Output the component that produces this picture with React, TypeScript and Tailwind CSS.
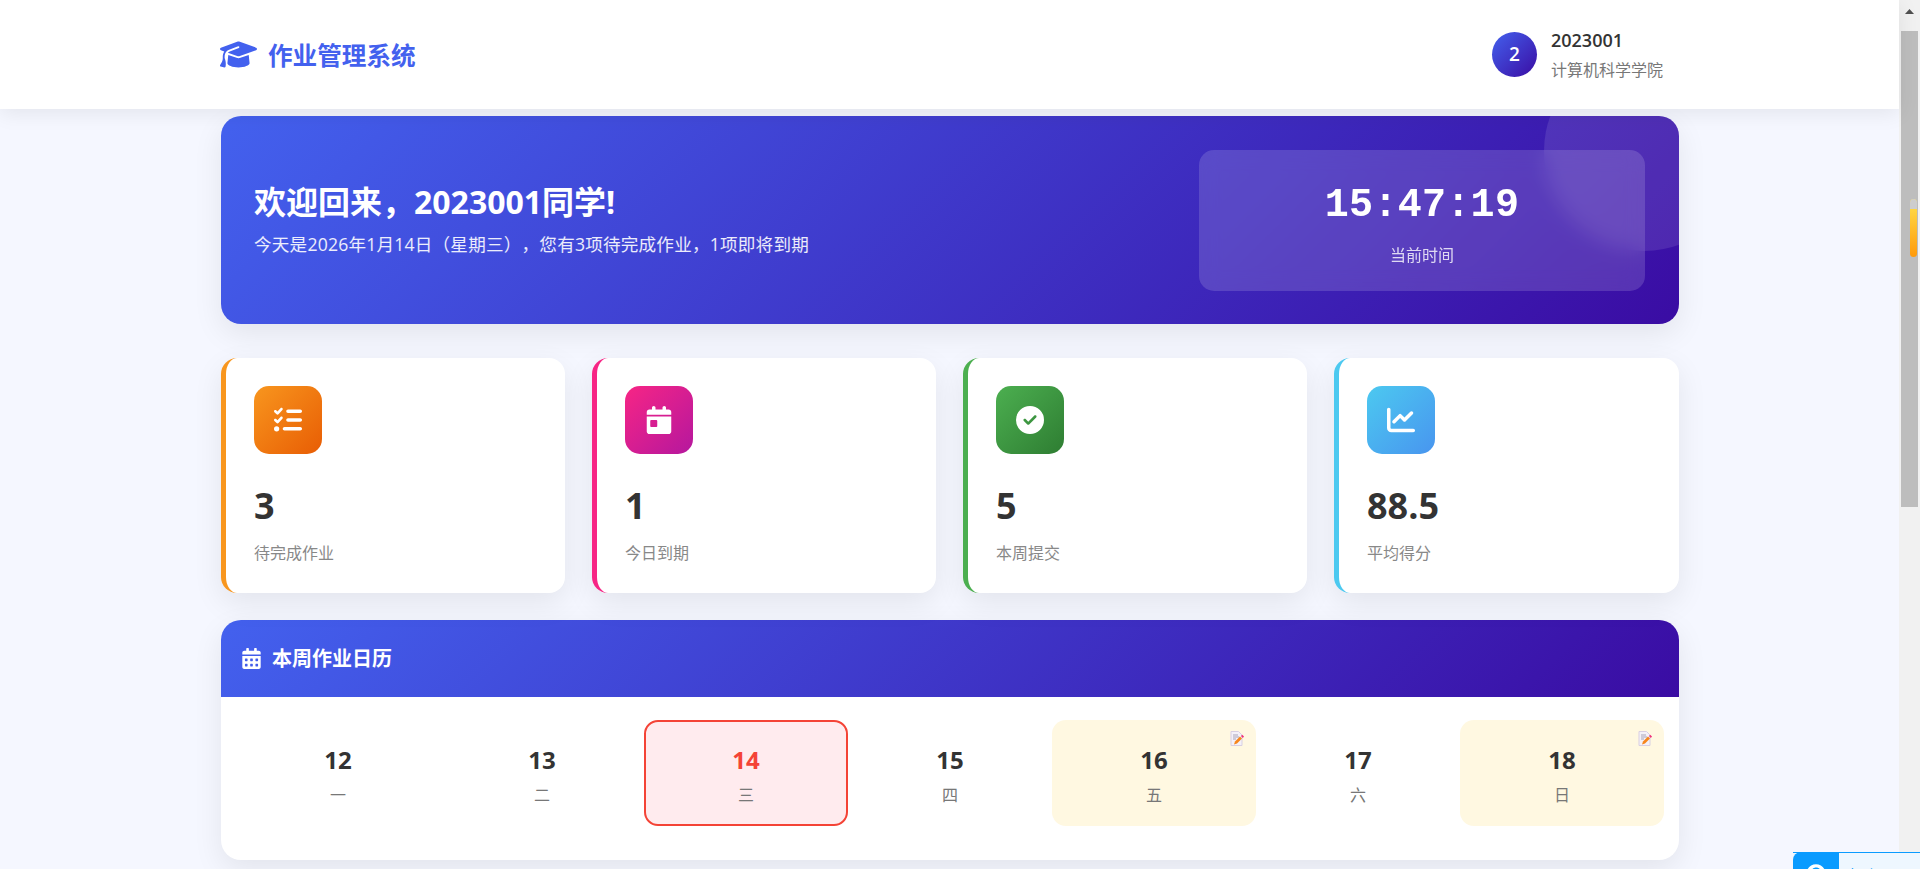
import { FaCalendarAlt, FaQuestionCircle } from "react-icons/fa";
import {
  FaGraduationCap,
  FaListCheck,
  FaCalendarDay,
  FaCircleCheck,
  FaChartLine,
} from "react-icons/fa6";

const stats = [
  {
    value: "3",
    label: "待完成作业",
    Icon: FaListCheck,
    border: "border-[#f8961e]",
    bg: "bg-[linear-gradient(135deg,#f8961e,#e85d04)]",
  },
  {
    value: "1",
    label: "今日到期",
    Icon: FaCalendarDay,
    border: "border-[#f72585]",
    bg: "bg-[linear-gradient(135deg,#f72585,#b5179e)]",
  },
  {
    value: "5",
    label: "本周提交",
    Icon: FaCircleCheck,
    border: "border-[#4caf50]",
    bg: "bg-[linear-gradient(135deg,#4caf50,#2e7d32)]",
  },
  {
    value: "88.5",
    label: "平均得分",
    Icon: FaChartLine,
    border: "border-[#4cc9f0]",
    bg: "bg-[linear-gradient(135deg,#4cc9f0,#4895ef)]",
  },
];

const days = [
  { date: "12", week: "一" },
  { date: "13", week: "二" },
  { date: "14", week: "三", today: true },
  { date: "15", week: "四" },
  { date: "16", week: "五", due: true },
  { date: "17", week: "六" },
  { date: "18", week: "日", due: true },
];

const MemoIcon = () => (
  <svg
    viewBox="0 0 14 15"
    className="absolute top-[11px] right-[12px] w-[14px] h-[15px]"
  >
    <path d="M1 .5h7.5L12 4v10.5H1z" fill="#f4f1f8" stroke="#d8cfe2" />
    <path d="M3 4h5M3 6h6M3 8h3" stroke="#a9a5b8" strokeWidth="1" />
    <path d="M4 13.5l1-3 5-5 2 2-5 5z" fill="#f7861c" />
    <path d="M11 5l1.2-1.2L14 5.5 12.8 7z" fill="#f0307a" />
  </svg>
);

const App = () => {
  return (
    <div className="flex h-[869px] overflow-hidden relative bg-[#f5f7ff] text-[#333] font-['Open_Sans','Noto_Sans_CJK_SC',sans-serif]">
      <div className="flex-1 min-w-0">
        <header className="relative z-10 h-[109px] bg-white shadow-[0_4px_20px_rgba(0,0,0,0.08)]">
          <div className="ml-[221px] w-[1458px] h-full flex items-center justify-between">
            <div className="flex items-center gap-[11px] text-[#4361ee]">
              <FaGraduationCap size={37} className="-ml-[1px]" />
              <span className="text-[24.6px] font-bold relative top-[2px]">作业管理系统</span>
            </div>
            <div className="flex items-center gap-[14px] mr-[16px]">
              <div className="w-[45px] h-[45px] rounded-full flex items-center justify-center text-white text-[19px] font-semibold bg-[linear-gradient(135deg,#4361ee,#3a0ca3)]">
                2
              </div>
              <div className="flex flex-col">
                <span className="text-[18px] leading-[24px] font-semibold">2023001</span>
                <span className="text-[16px] leading-[24px] mt-[6px] text-[#777]">计算机科学学院</span>
              </div>
            </div>
          </div>
        </header>

        <main className="ml-[221px] w-[1458px] pt-[7px]">
          <section className="relative overflow-hidden h-[208px] rounded-[20px] pl-[33px] pr-[34px] flex items-center justify-between text-white bg-[linear-gradient(135deg,#4361ee,#3a0ca3)] shadow-[0_10px_30px_rgba(0,0,0,0.08)]">
            <div className="absolute left-[1323px] top-[-65px] w-[200px] h-[200px] rounded-full bg-white/10" />
            <div className="relative">
              <h1 className="text-[32px] leading-[44px] font-bold -mt-[5px]">欢迎回来，2023001同学!</h1>
              <p className="text-[17.6px] leading-[24px] mt-[8px] text-white/90 tracking-[0.2px] [text-spacing-trim:space-all]">
                今天是2026年1月14日（星期三），您有3项待完成作业，1项即将到期
              </p>
            </div>
            <div className="relative w-[446px] h-[141px] rounded-[15px] bg-white/15 backdrop-blur-[10px] flex flex-col items-center">
              <div className="mt-[28px] text-[40px] leading-[56px] font-bold tracking-[0.3px] font-['Liberation_Mono',monospace]">
                15:47:19
              </div>
              <div className="mt-[9px] text-[16px] leading-[24px] text-white/80">当前时间</div>
            </div>
          </section>

          <section className="mt-[34px] grid grid-cols-[344px_344px_344px_345px] gap-[27px]">
            {stats.map(({ value, label, Icon, border, bg }) => (
              <div
                key={label}
                className={`h-[235px] bg-white rounded-[16px] border-l-[5px] ${border} pl-[28px] pt-[28px] shadow-[0_10px_30px_rgba(0,0,0,0.08)]`}
              >
                <div className={`w-[68px] h-[68px] rounded-[15px] flex items-center justify-center text-white ${bg}`}>
                  <Icon size={28} />
                </div>
                <div className="mt-[27px] text-[36px] leading-[50px] font-bold">{value}</div>
                <div className="mt-[10px] text-[16px] leading-[24px] text-[#888]">{label}</div>
              </div>
            ))}
          </section>

          <section className="mt-[27px] h-[240px] bg-white rounded-[20px] overflow-hidden shadow-[0_10px_30px_rgba(0,0,0,0.08)]">
            <div className="h-[77px] pl-[20px] flex items-center gap-[10px] text-white bg-[linear-gradient(135deg,#4361ee,#3a0ca3)]">
              <FaCalendarAlt size={21} />
              <span className="text-[20px] font-bold">本周作业日历</span>
            </div>
            <div className="grid grid-cols-7 px-[15px] pt-[23px]">
              {days.map((d) => (
                <div
                  key={d.date}
                  className={`relative h-[106px] rounded-[14px] flex flex-col items-center ${
                    d.today
                      ? "pt-[21px] border-2 border-[#f44336] bg-[#ffebee] text-[#f44336]"
                      : d.due
                        ? "pt-[23px] bg-[#fff8e1]"
                        : "pt-[23px]"
                  }`}
                >
                  <span className="text-[24px] leading-[34px] font-bold">{d.date}</span>
                  <span className="mt-[6px] text-[16px] leading-[24px] text-[#777]">{d.week}</span>
                  {d.due && <MemoIcon />}
                </div>
              ))}
            </div>
          </section>
        </main>
      </div>

      {/* scrollbar */}
      <div className="w-[21px] shrink-0 bg-[#f1f1f1] flex flex-col items-center">
        <div className="h-[31px] w-full flex justify-center pt-[9px]">
          <svg width="9" height="5" viewBox="0 0 9 5" className="block">
            <polygon points="4.5,0 9,5 0,5" fill="#505050" />
          </svg>
        </div>
        <div className="w-[17px] h-[476px] bg-[#bdbdbd]" />
      </div>

      {/* overlay on the scrollbar */}
      <div className="absolute left-[1910px] top-[199px] w-[7px] h-[58px] rounded-full overflow-hidden bg-[linear-gradient(180deg,#ffe14d,#ff9a0a)]">
        <div className="h-[10px] bg-[#cdcdcd]" />
      </div>

      {/* floating help widget, cut off by the window */}
      <div className="absolute left-[1793px] top-[852px] right-0 h-[50px] bg-[#eef7ff] border-t border-[#0a9bff] flex">
        <div className="w-[46px] h-[50px] -mt-px rounded-tl-[8px] bg-[#0a9bff] flex justify-center pt-[12px] text-white">
          <FaQuestionCircle size={20} />
        </div>
        <span className="ml-[9px] mt-[12px] text-[14px] leading-[20px] text-[#0a9bff]">帮助</span>
      </div>
    </div>
  );
};

export default App;
